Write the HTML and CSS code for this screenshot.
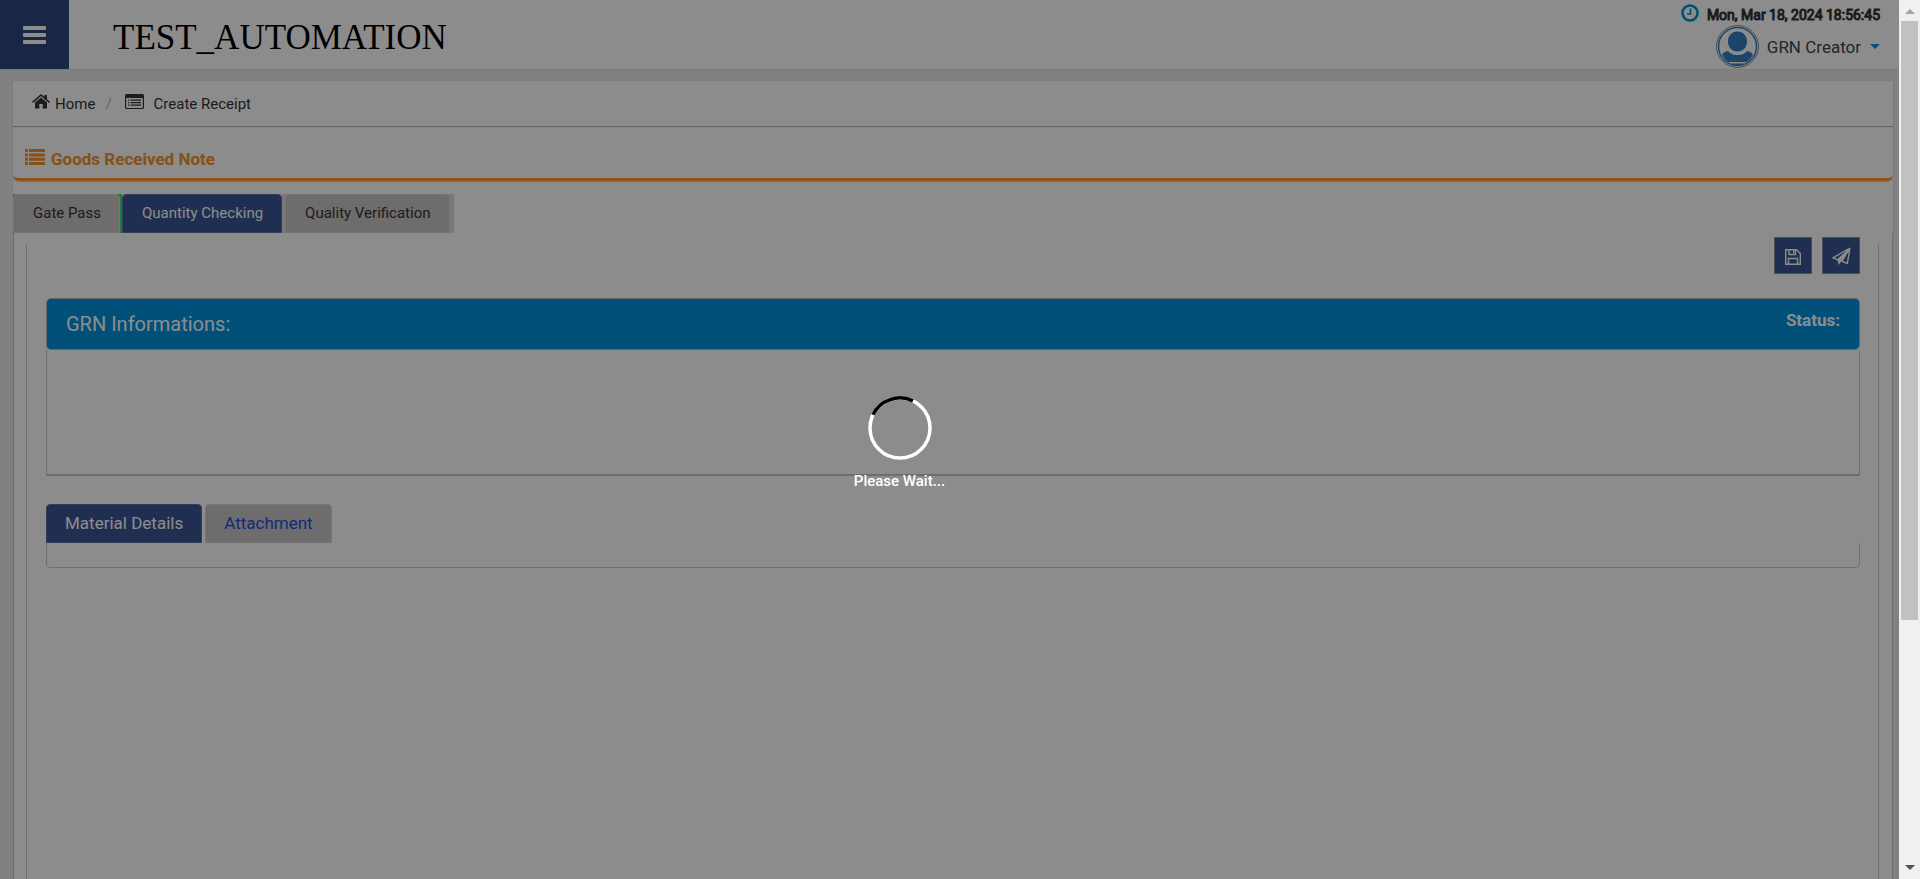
FILE: index.html
```html
<!DOCTYPE html>
<html lang="en">
<head>
<meta charset="utf-8">
<title>Goods Received Note</title>
<link rel="stylesheet" href="styles.css">
</head>
<body>
<div class="page">
  <header class="topbar">
    <button class="menu" aria-label="Menu">
      <svg width="23" height="18" viewBox="0 0 23 18" fill="currentColor"><rect y="0" width="23" height="4" rx="1"/><rect y="7" width="23" height="4" rx="1"/><rect y="14" width="23" height="4" rx="1"/></svg>
    </button>
    <div class="brand">TEST_AUTOMATION</div>
    <div class="account">
      <div class="clock">
        <svg width="18" height="18" viewBox="0 0 18 18" fill="none" stroke="currentColor"><circle cx="9" cy="9" r="7.5" stroke-width="2.6"/><path d="M9.500 4.500v5.500H6" stroke-width="1.700"/></svg>
        <time>Mon, Mar 18, 2024 18:56:45</time>
      </div>
      <button class="user">
        <svg class="avatar" width="43" height="43" viewBox="0 0 43 43"><circle cx="21.500" cy="21.500" r="21" fill="#fff" stroke="#8a8a8a"/><circle cx="21.500" cy="21.500" r="19" fill="none" stroke="#337fc4" stroke-width="1.500"/><path d="M21.500 6.500c6 0 9.500 4.500 9.500 10s-3.500 10-9.500 10-9.500-4.500-9.500-10 3.500-10 9.500-10zM12 26c3 3.500 6 4 9.500 4s6.500-.5 9.500-4c3 .5 4.500 1.500 6 3.500-1.500 3-3.500 5.500-6.500 7.500h-18C9.500 35 7.500 32.500 6 29.500c1.500-2 3-3 6-3.500zM15 38.500h13c-4 2-9 2-13 0z" fill="#337fc4"/></svg>
        <span>GRN Creator</span>
        <svg class="caret" width="10" height="5" viewBox="0 0 10 5"><path d="M0 0h10L5 5z" fill="currentColor"/></svg>
      </button>
    </div>
  </header>
  <main class="sheet">
    <nav class="crumbs" aria-label="Breadcrumb">
      <a href="#"><svg width="18" height="15" viewBox="0 0 18 15" fill="currentColor"><path d="M9 0 0 7.800l1 1.200 8-6.900L17 9l1-1.200-3-2.600V1h-2.600v2zM9 3.400 3 8.500V14.500h4.300V10h3.400v4.500H15V8.500z"/></svg><span>Home</span></a>
      <span class="slash">/</span>
      <a class="current" href="#"><svg width="19" height="15" viewBox="0 0 19 15"><path fill="currentColor" fill-rule="evenodd" d="M1.500 0h16A1.500 1.500 0 0 1 19 1.500v12a1.500 1.500 0 0 1-1.500 1.500h-16A1.500 1.500 0 0 1 0 13.500v-12A1.500 1.500 0 0 1 1.500 0zM1.200 4v9.300c0 .4.200.6.600.6h15.400c.4 0 .6-.2.600-.6V4zM3 5.500h1.200v1.200H3zM5.500 5.500H16v1.200H5.500zM3 8h1.200v1.200H3zM5.500 8H16v1.200H5.500zM3 10.500h1.200v1.200H3zM5.500 10.500H16v1.200H5.500z"/></svg><span>Create Receipt</span></a>
    </nav>
    <h1 class="title">
      <svg width="20" height="16" viewBox="0 0 20 16" fill="currentColor"><path d="M0 0h3v3H0zM4 0h16v3H4zM0 4.400h3v3H0zM4 4.400h16v3H4zM0 8.700h3v3H0zM4 8.700h16v3H4zM0 13h3v3H0zM4 13h16v3H4z"/></svg>
      <span>Goods Received Note</span>
    </h1>
    <div class="steps" role="tablist">
      <div class="step-edge"><button class="tab" role="tab">Gate Pass</button></div>
      <button class="tab active" role="tab" aria-selected="true">Quantity Checking</button>
      <div class="step-rest"><button class="tab" role="tab">Quality Verification</button></div>
    </div>
    <section class="frame">
      <div class="inner">
        <div class="actions">
          <button aria-label="Save"><svg width="16" height="16" viewBox="0 0 16 16" fill="none" stroke="currentColor" stroke-width="1.400"><path d="M.7.700h10.800l3.800 3.800v10.800H.7zM3.500 15.300V9.500h9v5.800M4 .7v4.800h6.500V.7"/><path d="M8 1.500h1.500v3H8z" fill="currentColor" stroke="none"/></svg></button>
          <button aria-label="Send"><svg width="19" height="19" viewBox="0 0 19 19" fill="none" stroke="currentColor" stroke-width="1.400" stroke-linejoin="round"><path d="M18 1 1 10.800l4.500 2L16 3.500M18 1l-2.700 15.500-5.300-2.300 6.500-11"/><path d="M5.500 12.800 18 1 9.500 14.300 6.500 18z" fill="currentColor" stroke="none"/></svg></button>
        </div>
        <section class="panel">
          <header class="panel-head"><h2>GRN Informations:</h2><strong>Status:</strong></header>
          <div class="panel-body"></div>
        </section>
        <div class="subtabs" role="tablist">
          <button class="tab active" role="tab" aria-selected="true">Material Details</button>
          <button class="tab link" role="tab">Attachment</button>
        </div>
        <div class="subpanel"></div>
      </div>
    </section>
  </main>
  <div class="overlay" role="status">
    <svg width="64" height="64" viewBox="0 0 64 64" fill="none" stroke-width="3.500"><circle cx="32" cy="32" r="30" stroke="#fff"/><path d="M5 18.700A30 30 0 0 1 45 4.900" stroke="#000"/></svg>
    <span>Please Wait...</span>
  </div>
</div>
<div class="scrollbar" aria-hidden="true">
  <svg width="10" height="5" viewBox="0 0 10 5"><path d="M5 0l5 5H0z" fill="#a3a3a3"/></svg>
  <div class="track"><div class="thumb"></div></div>
  <svg width="10" height="5" viewBox="0 0 10 5"><path d="M0 0h10L5 5z" fill="#505050"/></svg>
</div>
</body>
</html>
```
FILE: styles.css
```css
* { box-sizing: border-box; }
body {
  margin: 0;
  height: 100vh;
  display: flex;
  overflow: hidden;
  font-family: Roboto, "Liberation Sans", sans-serif;
  font-size: 15px;
  color: #333;
}
button { font: inherit; border: 0; cursor: pointer; }
svg { flex: none; }
.page {
  position: relative;
  flex: 1;
  min-width: 0;
  display: flex;
  flex-direction: column;
  background: #ececec;
}
.topbar {
  flex: none;
  display: flex;
  background: #fff;
  height: 69px;
  box-shadow: 0 1px 1px #e0e0e0;
}
.menu {
  width: 69px;
  display: flex;
  align-items: center;
  justify-content: center;
  padding: 1px 0 0;
  background: #31477c;
  color: #fff;
}
.brand {
  margin-left: 44px;
  padding-top: 18px;
  font: 35px/40px "Liberation Serif", serif;
  color: #000;
}
.account {
  margin-left: auto;
  padding: 4px 19px 0 0;
  display: flex;
  flex-direction: column;
  align-items: flex-end;
}
.clock {
  display: flex;
  gap: 8px;
  color: #0092de;
  height: 21px;
}
.clock time {
  color: #333;
  font-size: 14px;
  line-height: 23px;
  -webkit-text-stroke: 1px;
}
.user {
  display: flex;
  align-items: center;
  padding: 0;
  background: none;
  color: #444;
  font-size: 17px;
}
.user span { margin: 0 9px 0 8px; }
.caret { color: #0092de; }
.sheet {
  flex: 1;
  min-height: 0;
  margin: 12px 6px 0 13px;
  display: flex;
  flex-direction: column;
  background: #fff;
  box-shadow: 0 0 1px #bbb;
}
.crumbs {
  display: flex;
  align-items: center;
  height: 45px;
  padding-left: 19px;
  box-shadow: 0 1px 1px #bbb;
}
.crumbs a {
  display: flex;
  align-items: center;
  gap: 5px;
  color: #333;
  text-decoration: none;
}
.crumbs svg { margin-bottom: 4px; }
.crumbs .current { gap: 10px; }
.slash { margin: 0 13px 0 10px; color: #bbb; }
.title {
  display: flex;
  align-items: center;
  gap: 6px;
  height: 55px;
  margin: 0;
  padding: 13px 0 0 12px;
  border-bottom: 3px solid #ff9824;
  border-radius: 0 0 6px 6px;
  font-size: 17px;
  font-weight: 700;
  color: #f5922a;
  box-shadow: 0 1px 2px #ccc;
}
.title svg { margin-bottom: 4px; }
.steps { display: flex; margin-top: 13px; }
.step-edge { padding-right: 2px; background: #31e654; }
.step-rest { padding: 0 4px 0 3px; background: #dadada; }
.tab {
  height: 39px;
  padding: 0 18px 1px;
  border: 1px solid #d5d5d5;
  border-radius: 4px 4px 0 0;
  background: #c9c5c6;
  color: #333;
}
.steps .tab { padding-left: 19px; }
.tab.active { background: #3b5595; border-color: #5a70a5; color: #fff; }
.frame {
  display: flow-root;
  flex: 1;
  min-height: 0;
  padding: 11px 13px 0 12px;
  border: solid #c8c8c8;
  border-width: 0 1px;
}
.inner {
  display: flow-root;
  height: 100%;
  padding: 0 18px 0 19px;
  border: solid #c8c8c8;
  border-width: 0 1px;
}
.actions { display: flex; justify-content: flex-end; gap: 10px; margin-top: -7px; }
.actions button {
  width: 38px;
  height: 37px;
  display: grid;
  place-items: center;
  padding: 2px 0 0;
  background: #3b5595;
  border: 1px solid #8291a0;
  color: #fff;
}
.panel { margin-top: 24px; }
.panel-head {
  display: flex;
  justify-content: space-between;
  height: 52px;
  padding: 0 19px;
  background: #0092de;
  border: 1px solid #bbb;
  border-radius: 5px;
  color: #fff;
}
.panel-head h2 { margin: 0; font-size: 20px; font-weight: 400; line-height: 51px; }
.panel-head strong { font-size: 17px; font-weight: 700; line-height: 43px; }
.panel-body { height: 126px; border: 1px solid #ccc; border-top: 0; border-bottom: 2px solid #c8c8c8; }
.subtabs { display: flex; gap: 3px; margin-top: 28px; font-size: 17px; }
.tab.link { color: #1f4fe0; }
.subpanel { height: 25px; border: 1px solid #c8c8c8; border-top: 0; border-radius: 0 0 5px 5px; }
.overlay {
  position: absolute;
  inset: 0;
  display: flex;
  flex-direction: column;
  align-items: center;
  justify-content: center;
  gap: 12px;
  padding: 6px 100px 0 0;
  background: rgba(0, 0, 0, .45);
  color: #fff;
  font-weight: 500;
}
.scrollbar {
  flex: none;
  width: 21px;
  display: flex;
  flex-direction: column;
  align-items: center;
  gap: 7px;
  padding: 9px 2px;
  background: #f0f0f0;
}
.track { flex: 1; align-self: stretch; }
.thumb { height: 71.6%; background: #c1c1c1; }
```
